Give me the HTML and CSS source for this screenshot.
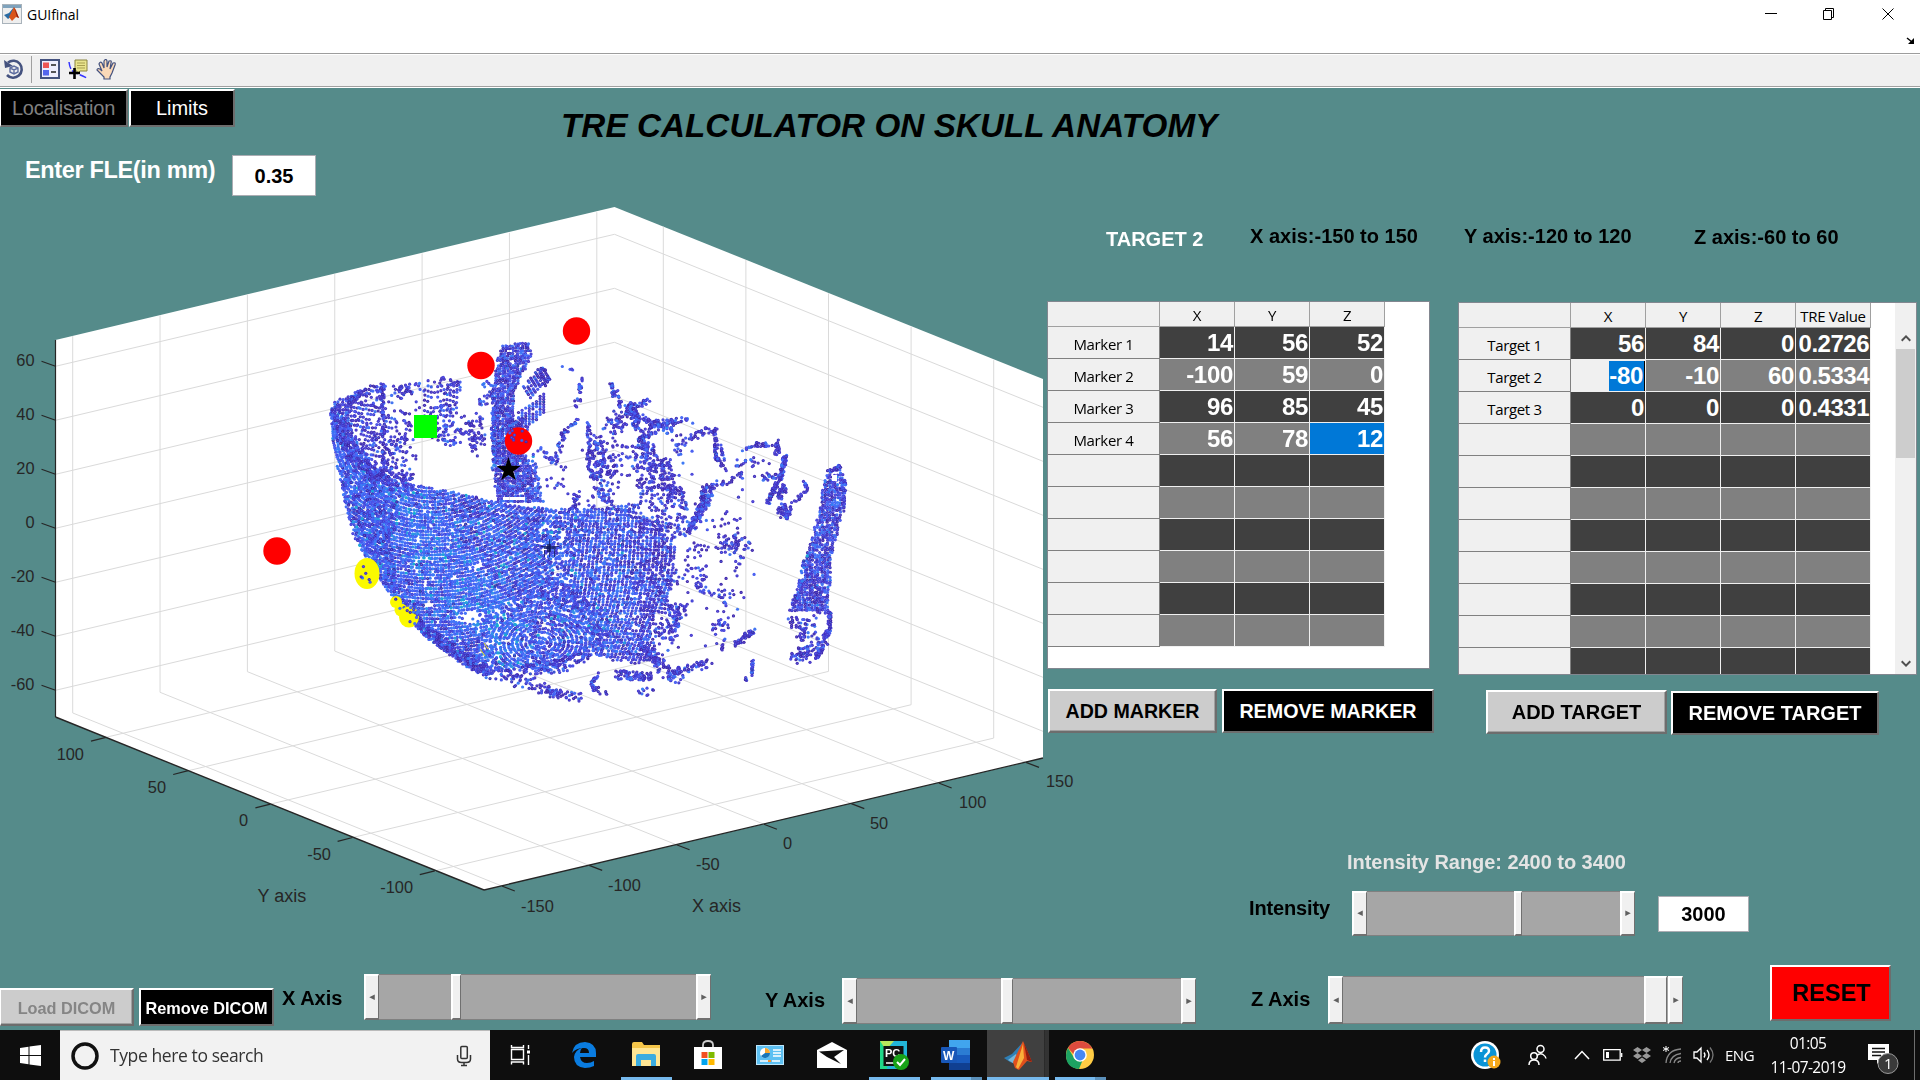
FILE: index.html
```html
<!DOCTYPE html>
<html lang="en">
<head>
<meta charset="utf-8">
<title>GUIfinal</title>
<link rel="stylesheet" href="styles.css">
</head>
<body>
<div class="window">
  <header class="titlebar">
    <svg class="app-icon" width="20" height="20" viewBox="0 0 20 20"><rect x=".5" y=".5" width="19" height="19" fill="#eee" stroke="#a9b3bb"/><rect x="1" y="1" width="18" height="3" fill="#7fa3bd"/><path d="M2 11l5-2 5-6-2 9-4 3z" fill="#2b6ca3"/><path d="M7 13l5-10 2 3 3 8-3-1-4 4z" fill="#d9541a"/><path d="M12 3l5 11-2-1z" fill="#8c1d12"/></svg>
    <span class="app-title">GUIfinal</span>
    <div class="win-controls">
      <svg width="130" height="16" viewBox="0 0 130 16" fill="none" stroke="#000"><path d="M0 7.5h12"/><path d="M58.500 4.500h8v9h-8zM60.500 4.500v-2h8v9h-2M117.500 2.500l11 11M128.500 2.500l-11 11"/></svg>
      <svg class="dock" width="9" height="8" viewBox="0 0 9 8"><path d="M1 1l5 4" stroke="#000" stroke-width="1.500"/><path d="M8 1v6H2z"/></svg>
    </div>
  </header>

  <div class="toolbar">
    <svg width="22" height="22" viewBox="0 0 22 22" fill="none"><path d="M5 4.500A8.500 8.500 0 1 1 4 17" stroke="#44527f" stroke-width="2.600"/><path d="M1 2l1 8 8-2z" fill="#44527f"/><path d="M7 10l4-2 4 2v4l-4 2-4-2zM7 10l4 2 4-2M11 12v4" stroke="#5f6ea0" stroke-width="1.400"/></svg>
    <i class="tool-sep"></i>
    <svg width="20" height="20" viewBox="0 0 20 20"><rect x="1" y="1" width="18" height="18" fill="#eef" stroke="#44527f" stroke-width="2"/><rect x="3" y="3.500" width="6" height="5.500" fill="#e55"/><rect x="3" y="11" width="6" height="5.500" fill="#56e"/><path d="M11 6h5M11 13h5" stroke="#222" stroke-width="1.500"/></svg>
    <svg width="20" height="20" viewBox="0 0 20 20"><path d="M1 3q1 8 5 10t13 6" fill="none" stroke="#33f" stroke-width="1.500" stroke-dasharray="7 2"/><path d="M7 1h12v11h-7l-3 3v-3H7z" fill="#e9e48c" stroke="#8a8440"/><path d="M9 4h8M9 6.500h8M9 9h8" stroke="#a79f50"/><path d="M1 14h11M6.500 9v11" stroke="#000" stroke-width="2.600"/></svg>
    <svg width="21" height="21" viewBox="0 0 21 21"><path d="M8 20v-2L1 11q0-2 3-1l2 2-3-7q1-3 3-1l2 5V2q2-3 3 0v6l2-6q3-1 2 2l-1 6 3-6q3-1 2 2l-3 8-2 4v2z" fill="#fbd9b8" stroke="#44527f" stroke-width="1.200"/></svg>
  </div>

  <main class="figure">
    <section class="head">
      <div class="head-left">
        <div class="tabs">
          <button class="btn dark tab tab-off">Localisation</button>
          <button class="btn dark tab tab-on">Limits</button>
        </div>
        <div class="fle"><label>Enter FLE(in mm)</label><span class="edit fle-edit">0.35</span></div>
      </div>
      <h1>TRE CALCULATOR ON SKULL ANATOMY</h1>
    </section>

    <section class="middle">
      <div class="plot">
        <svg id="axes" width="1100" height="725" viewBox="0 200 1100 725"></svg>
        <canvas id="cloud" width="1100" height="725"></canvas>
        <svg width="1100" height="725" viewBox="0 200 1100 725">
          <circle cx="576.500" cy="331" r="13.700" fill="red"/>
          <circle cx="481" cy="365.500" r="13.700" fill="red"/>
          <circle cx="277" cy="551" r="13.700" fill="red"/>
          <rect x="414" y="415" width="23" height="23" fill="#0f0"/>
          <path d="M508.500 457l2.900 8.800 9.100.1-7.300 5.500 2.700 8.900-7.400-5.300-7.400 5.300 2.700-8.900-7.300-5.500 9.100-.1z"/>
        </svg>
      </div>

      <div class="side">
        <div class="ranges">
          <span class="r-target">TARGET 2</span><span class="r-x">X axis:-150 to 150</span><span class="r-y">Y axis:-120 to 120</span><span class="r-z">Z axis:-60 to 60</span>
        </div>
        <div class="tables">
          <div class="marker-col">
            <div class="sheet sheet-m">
              <table><colgroup><col class="c-name"><col><col><col></colgroup>
                <tr><th></th><th>X</th><th>Y</th><th>Z</th></tr>
                <tr><th>Marker 1</th><td>14</td><td>56</td><td>52</td></tr>
                <tr><th>Marker 2</th><td>-100</td><td>59</td><td>0</td></tr>
                <tr><th>Marker 3</th><td>96</td><td>85</td><td>45</td></tr>
                <tr><th>Marker 4</th><td>56</td><td>78</td><td class="sel">12</td></tr>
                <tr><th></th><td></td><td></td><td></td></tr>
                <tr><th></th><td></td><td></td><td></td></tr>
                <tr><th></th><td></td><td></td><td></td></tr>
                <tr><th></th><td></td><td></td><td></td></tr>
                <tr><th></th><td></td><td></td><td></td></tr>
                <tr><th></th><td></td><td></td><td></td></tr>
              </table>
            </div>
            <div class="btn-row row-m"><button class="btn light add-m">ADD MARKER</button><button class="btn dark rem-m">REMOVE MARKER</button></div>
          </div>
          <div class="target-col">
            <div class="sheet sheet-t">
              <table><colgroup><col class="c-name"><col><col><col><col></colgroup>
                <tr><th></th><th>X</th><th>Y</th><th>Z</th><th>TRE Value</th></tr>
                <tr><th>Target 1</th><td>56</td><td>84</td><td>0</td><td class="tre">0.2726</td></tr>
                <tr><th>Target 2</th><td class="edit-cell"><span>-80</span></td><td>-10</td><td>60</td><td class="tre">0.5334</td></tr>
                <tr><th>Target 3</th><td>0</td><td>0</td><td>0</td><td class="tre">0.4331</td></tr>
                <tr><th></th><td></td><td></td><td></td><td></td></tr>
                <tr><th></th><td></td><td></td><td></td><td></td></tr>
                <tr><th></th><td></td><td></td><td></td><td></td></tr>
                <tr><th></th><td></td><td></td><td></td><td></td></tr>
                <tr><th></th><td></td><td></td><td></td><td></td></tr>
                <tr><th></th><td></td><td></td><td></td><td></td></tr>
                <tr><th></th><td></td><td></td><td></td><td></td></tr>
                <tr><th></th><td></td><td></td><td></td><td></td></tr>
              </table>
              <div class="vscroll">
                <svg width="10" height="7" viewBox="0 0 10 7" fill="none" stroke="#505050" stroke-width="2"><path d="M.7 5.700L5 1.400l4.300 4.300"/></svg>
                <i></i>
                <svg class="down" width="10" height="7" viewBox="0 0 10 7" fill="none" stroke="#505050" stroke-width="2"><path d="M.7 1.300L5 5.600l4.300-4.300"/></svg>
              </div>
            </div>
            <div class="btn-row row-t"><button class="btn light add-t">ADD TARGET</button><button class="btn dark rem-t">REMOVE TARGET</button></div>
          </div>
        </div>
        <div class="int-title">Intensity Range: 2400 to 3400</div>
        <div class="int-row">
          <label>Intensity</label>
          <div class="slider s-int"><b>◂</b><i class="gap" style="width:147px"></i><u style="width:8px"></u><i class="rest"></i><b>▸</b></div>
          <span class="edit int-edit">3000</span>
        </div>
      </div>
    </section>

    <section class="bottom">
      <button class="btn light load">Load DICOM</button>
      <button class="btn dark remove">Remove DICOM</button>
      <label class="l-x">X Axis</label>
      <div class="slider s-x"><b>◂</b><i class="gap" style="width:72px"></i><u style="width:10px"></u><i class="rest"></i><b>▸</b></div>
      <label class="l-y">Y Axis</label>
      <div class="slider s-y"><b>◂</b><i class="gap" style="width:144px"></i><u style="width:12px"></u><i class="rest"></i><b>▸</b></div>
      <label class="l-z">Z Axis</label>
      <div class="slider s-z"><b>◂</b><i class="gap" style="width:301px"></i><u style="width:23px"></u><i class="rest"></i><b>▸</b></div>
      <button class="btn reset">RESET</button>
    </section>
  </main>

  <footer class="taskbar">
    <div class="start"><svg width="21" height="21" viewBox="0 0 21 21" fill="#fff"><path d="M0 3l8.500-1.200V10H0zM9.500 1.600L21 0v10H9.500zM0 11h8.500v8.200L0 18zM9.500 11H21v10L9.500 19.400z"/></svg></div>
    <div class="search">
      <svg width="30" height="30" viewBox="0 0 30 30"><circle cx="15" cy="15" r="12" fill="none" stroke="#111" stroke-width="3.500"/></svg>
      <span>Type here to search</span>
      <svg width="16" height="22" viewBox="0 0 16 22" fill="none" stroke="#333" stroke-width="1.500"><rect x="4.800" y="1.500" width="6.500" height="12" rx="1"/><path d="M1.500 10v4q0 3.500 4 3.500h5q4 0 4-3.500v-4M8 17.500V21M5 20.500h6"/></svg>
    </div>
    <div class="task first"><svg width="22" height="22" viewBox="0 0 22 22" fill="none" stroke="#fff" stroke-width="1.400"><path d="M1.500 5.500h12v10h-12zM1.500 1v2.500h12V1M1.500 20.500V18h12v2.500M18.500 1v4M18.500 11v10"/><path d="M17 8h3" stroke-width="3"/></svg></div>
    <div class="task"><svg width="26" height="28" viewBox="0 0 26 28"><path d="M1 12Q3 1 14 1q11 1 11 11v4H9q1 6 7 6 4 0 7-2v5q-4 2-9 2Q3 26 3 16q1-7 8-9-2 2-2 5h9q0-5-5-5-8 0-12 5z" fill="#0a7ce0"/></svg></div>
    <div class="task run r-full"><svg width="28" height="26" viewBox="0 0 28 26"><path d="M0 2q0-2 2-2h8l2 3h16v21H0z" fill="#f5c64a"/><path d="M0 6h28v18H0z" fill="#ffe694"/><path d="M4 24V14q0-2 2-2h16q2 0 2 2v10h-5v-6H9v6z" fill="#3bace0"/></svg></div>
    <div class="task"><svg width="30" height="30" viewBox="0 0 30 30"><path d="M10 8V5q0-4 5-4t5 4v3" fill="none" stroke="#ccc" stroke-width="1.800"/><path d="M1 7h28v22H1z" fill="#fff"/><path d="M8.500 12h6v6h-6z" fill="#f25022"/><path d="M15.500 12h6v6h-6z" fill="#7fba00"/><path d="M8.500 19h6v6h-6z" fill="#00a4ef"/><path d="M15.500 19h6v6h-6z" fill="#ffb900"/></svg></div>
    <div class="task"><svg width="28" height="20" viewBox="0 0 28 20"><rect x=".5" y=".5" width="27" height="19" fill="#5dc0f2" stroke="#bce6fb"/><circle cx="9" cy="8" r="5" fill="#fff"/><path d="M9 8V3a5 5 0 0 1 5 5z" fill="#f7a72e"/><path d="M9 8h5a5 5 0 0 1-9 3z" fill="#1976b8"/><path d="M17 5h8M17 8h8M17 11h8M4 16h8M16 16h8" stroke="#fff" stroke-width="1.500"/><path d="M12 16h3" stroke="#f7932e" stroke-width="2"/></svg></div>
    <div class="task"><svg width="30" height="26" viewBox="0 0 30 26"><path d="M0 8L15 0l15 8v18H0z" fill="#fff"/><path d="M2 9.500L27 8 17 15l7 7-14-7z" fill="#0d0d0d"/></svg></div>
    <div class="task run r-full"><svg width="30" height="30" viewBox="0 0 30 30"><path d="M1 1h18l-8 28H1z" fill="#21d789"/><path d="M12 1h16v17l-10 11H8z" fill="#22b5d8"/><path d="M1 1h14l-8 9z" fill="#b8e65c"/><path d="M4.500 6h20v20h-20z" fill="#111"/><text x="6" y="17" class="ico" font-size="11">PC</text><path d="M7 23h8" stroke="#fff" stroke-width="1.500"/><circle cx="22" cy="22" r="8" fill="#18a318"/><path d="M18 22l3 3 5-6" fill="none" stroke="#fff" stroke-width="2"/></svg></div>
    <div class="task run r-multi"><svg width="30" height="30" viewBox="0 0 30 30"><path d="M8 0h21v8H8z" fill="#41a5ee"/><path d="M8 8h21v7H8z" fill="#2b7cd3"/><path d="M8 15h21v8H8z" fill="#185abd"/><path d="M8 23h21v7H8z" fill="#103f91"/><rect y="7" width="16" height="16" rx="1" fill="#1857b8"/><text x="2" y="19.500" class="ico" font-size="12">W</text></svg></div>
    <div class="task run r-full active"><svg width="30" height="30" viewBox="0 0 30 30"><path d="M1 18l8-4L20 2l-8 22-5-2z" fill="#2f7fb5"/><path d="M5 20l8-6 2 4-5 5z" fill="#7ab8d8"/><path d="M12 28l-2-6L20 1l9 21-5-1-8 9z" fill="#e0501c"/><path d="M13 27l7-23 1 14-6 11z" fill="#f9b03a"/><path d="M21 3l8 19-5-2z" fill="#8f1d10"/></svg></div>
    <div class="task run r-multi"><svg width="28" height="28" viewBox="0 0 28 28"><circle cx="14" cy="14" r="14" fill="#fc4"/><path d="M2 7Q6 0 14 0q8 0 12.500 7.500H14q-5 1-6 6z" fill="#dd4b3e"/><path d="M2 7l6.500 10.500q4 4 8 2L13 28Q0 27 0 14q0-4 2-7z" fill="#1da362"/><circle cx="14" cy="14" r="6.800" fill="#fff"/><circle cx="14" cy="14" r="5.400" fill="#4587f3"/></svg></div>
    <div class="tray">
      <svg class="t-help" width="30" height="30" viewBox="0 0 30 30"><circle cx="14" cy="15" r="14" fill="#fff"/><circle cx="14" cy="15" r="11.500" fill="#0b94d6"/><path d="M10 12q0-4.500 4-4.500t4 3.500q0 2-2.500 3.500-1.500 1-1.500 3M14 19.500v2.500" fill="none" stroke="#fff" stroke-width="2.500"/><circle cx="23" cy="22" r="6.500" fill="#f5a91d"/><path d="M23 18v2M23 21v5" stroke="#fff" stroke-width="2"/></svg>
      <svg class="t-people" width="19" height="22" viewBox="0 0 19 22" fill="none" stroke="#fff" stroke-width="1.500"><circle cx="12.500" cy="5" r="3.500"/><circle cx="6" cy="12" r="3.300"/><path d="M9 11.500q3-3 6-1 3 2 3 4M1 21q0-5 5-5t5 5"/></svg>
      <svg class="t-chev" width="16" height="10" viewBox="0 0 16 10" fill="none" stroke="#fff" stroke-width="1.500"><path d="M1 9l7-7.500L15 9"/></svg>
      <svg class="t-batt" width="20" height="12" viewBox="0 0 20 12" fill="none" stroke="#fff" stroke-width="1.300"><path d="M.7.700h16.500v10.500H.7zM18.700 4v4"/><path d="M3 3h3v6H3z" fill="#fff" stroke="none"/></svg>
      <svg class="t-drop" width="18" height="17" viewBox="0 0 18 17" fill="#999"><path d="M4.500 0L9 3 4.500 6 0 3zM13.500 0L18 3l-4.500 3L9 3zM4.500 6L9 9l-4.500 3L0 9zM13.500 6L18 9l-4.500 3L9 9zM9 10.500l4 2.800L9 16l-4-2.700z"/></svg>
      <svg class="t-wifi" width="19" height="20" viewBox="0 0 19 20" fill="none" stroke="#888" stroke-width="1.300"><path d="M3 18Q4 5 18 4M7 18Q8 10 18 8.500M11 18q1-5 7-5.500M15 18q0-2 3-2"/><path d="M3 1v6M0 2.500l6 3M6 2.500l-6 3" stroke="#fff" stroke-width="1"/></svg>
      <svg class="t-vol" width="21" height="18" viewBox="0 0 21 18" fill="none" stroke="#fff" stroke-width="1.300"><path d="M1 6h3l4-4v14l-4-4H1zM11 6.500q2 2.500 0 5M14 4q4 5 0 10"/><path d="M17 1.500q6 7.500 0 15" stroke="#777"/></svg>
      <span class="lang">ENG</span>
      <span class="clock"><span>01:05</span><span>11-07-2019</span></span>
      <svg class="t-note" width="32" height="32" viewBox="0 0 32 32"><path d="M0 2h21v16h-8l-4 4v-4H0z" fill="#fff"/><path d="M4 6.500h13M4 10h13M4 13.500h9" stroke="#111" stroke-width="1.300"/><circle cx="20" cy="21.500" r="10" fill="#3a3a3a" stroke="#999"/><text x="16" y="27" class="badge">1</text></svg>
      <i class="peek"></i>
    </div>
  </footer>
</div>
<script src="script.js"></script>
</body>
</html>
```
FILE: styles.css
```css
* { box-sizing: border-box; }
body { margin: 0; font-family: "Liberation Sans", Arial, sans-serif; overflow: hidden; background: #fff; }
.window { width: 1920px; height: 1080px; display: flex; flex-direction: column; }
svg, canvas { display: block; }

.titlebar { height: 53px; display: flex; align-items: flex-start; background: #fff; }
.app-icon { margin: 4px 0 0 2px; }
.app-title { margin: 5px 0 0 5px; font: 14px/19px "Open Sans", sans-serif; letter-spacing: -0.050px; }
.win-controls { margin-left: auto; padding-top: 6px; display: flex; flex-direction: column; align-items: flex-end; gap: 15px; padding-right: 5px; }
.win-controls > svg:first-child { margin-right: 20px; }

.toolbar { height: 35px; border-top: 1px solid #9d9d9d; border-bottom: 1px solid #fff; background: #f0f0f0; box-shadow: inset 0 1px #fff, inset 0 -1px #a0a0a0; display: flex; align-items: center; padding-left: 3px; padding-bottom: 3px; }
.tool-sep { width: 1px; height: 27px; background: #a0a0a0; margin: 0 8px 0 6px; }
.toolbar svg + svg { margin-left: 8px; }

.figure { height: 942px; background: #558b8a; display: flex; flex-direction: column; }
.btn { font: bold 20px "Liberation Sans", Arial, sans-serif; padding: 0; border: 2px solid; border-color: #fff #6d6d6d #6d6d6d #fff; border-radius: 0; white-space: nowrap; flex: none; }
.dark { background: #000; color: #fff; }
.light { background: #ccc; color: #000; box-shadow: inset -1px -1px #a0a0a0; }
.edit { background: #fff; border: 1px solid #abadb3; font-weight: bold; font-size: 20px; display: flex; align-items: center; justify-content: center; flex: none; }
label { font-weight: bold; font-size: 20px; white-space: nowrap; flex: none; }

.head { height: 112px; display: flex; }
.head-left { width: 561px; }
.tabs { display: flex; gap: 1px; padding-top: 1px; }
.tab { height: 38px; font-weight: normal; font-size: 20px; }
.tab-off { width: 128px; color: #808080; border-left-width: 1px; letter-spacing: -0.200px; }
.tab-on { width: 106px; }
.fle { display: flex; }
.fle label { color: #fff; font-size: 23.500px; margin: 30px 0 0 25px; width: 207px; line-height: 27px; letter-spacing: -0.350px; }
.fle-edit { width: 84px; height: 41px; margin-top: 28px; padding-top: 1px; }
h1 { margin: 19px 0 0; font: italic bold 33.200px/38px "Liberation Sans", Arial, sans-serif; color: #000; white-space: nowrap; letter-spacing: 0.080px; }

.middle { height: 725px; display: flex; }
.plot { width: 1047px; display: grid; flex: none; }
.plot > * { grid-area: 1 / 1; }
.tick { font-size: 16.400px; fill: #262626; }
.name { font-size: 18px; fill: #262626; }
.side { flex: 1; }
.ranges { height: 101px; display: flex; align-items: flex-start; padding-left: 59px; font: bold 20px/23px "Liberation Sans", Arial, sans-serif; white-space: nowrap; }
.ranges span { flex: none; padding-top: 25px; }
.ranges .r-target { color: #fff; width: 144px; padding-top: 28px; }
.ranges .r-x { width: 214px; }
.ranges .r-y { width: 230px; }
.ranges .r-z { padding-top: 26px; }

.tables { display: flex; gap: 28px; height: 447px; }
.marker-col { width: 383px; }
.target-col { padding-top: 1px; width: 459px; }
.sheet { background: #fff; border: 1px solid #828790; overflow: hidden; display: flex; }
.sheet-m { width: 383px; height: 368px; }
.sheet-t { width: 459px; height: 373px; justify-content: space-between; }
table { border-collapse: separate; border-spacing: 0; table-layout: fixed; flex: none; width: max-content; align-self: flex-start; }
col { width: 75px; }
.c-name { width: 112px; }
th { font: 15px/20px "Open Sans", sans-serif; background: #f0f0f0; border-right: 1px solid #808080; border-bottom: 1px solid #808080; padding: 3px 0 0; text-align: center; letter-spacing: -0.350px; white-space: nowrap; overflow: hidden; }
tr:first-child th { height: 25px; padding: 1px 0 0; line-height: 20px; border-color: #a0a0a0; }
tr th:first-child { width: 112px; }
tr:first-child th:not(:first-child) { width: 75px; }
tr { height: 32px; }
tr:first-child { height: 25px; }
td { font-weight: bold; font-size: 24px; line-height: 30px; height: 32px; padding: 1px 1px 0 0; text-align: right; color: #fff; background: #808080; border-right: 1px solid #f0f0f0; border-bottom: 1px solid #f0f0f0; white-space: nowrap; letter-spacing: -0.300px; }
tr:nth-child(even) td { background: #404040; }
tr td.sel { background: #0078d7; }
tr td.edit-cell { background: #f0f0f0; padding-right: 0; }
.edit-cell span { background: #0078d7; display: inline-block; height: 30px; border-right: 1px solid #000; padding: 0 1px 0 0; vertical-align: top; }
td.tre { letter-spacing: -0.500px; }
.vscroll { width: 21px; background: #f0f0f0; display: flex; flex-direction: column; align-items: center; padding-top: 32px; }
.vscroll i { width: 19px; height: 109px; background: #cdcdcd; margin-top: 7px; }
.vscroll .down { margin: auto 0 7px; }
.btn-row { display: flex; align-items: flex-start; }
.row-m { padding: 20px 0 0 1px; gap: 5px; }
.row-t { padding: 15px 0 0 28px; gap: 4px; }
.add-m { width: 169px; height: 44px; font-size: 19.600px; }
.rem-m { width: 212px; height: 44px; font-size: 19.700px; }
.add-t { width: 181px; height: 44px; }
.rem-t { width: 208px; height: 44px; margin-top: 1px; }

.int-title { margin: 103px 0 0 300px; font: bold 20px/23px "Liberation Sans", Arial, sans-serif; color: #e4e4e4; letter-spacing: -0.040px; }
.int-row { display: flex; align-items: flex-start; margin-top: 17px; padding-left: 202px; }
.int-row label { width: 103px; padding-top: 6px; line-height: 23px; letter-spacing: -0.150px; }
.int-edit { width: 91px; height: 36px; margin: 5px 0 0 23px; }

.slider { display: flex; background: #a6a6a6; flex: none; border-top: 1px solid #808080; border-bottom: 1px solid #808080; }
.slider b, .slider u { background: #f0f0f0; border: 2px solid; border-color: #fff #707070 #707070 #fff; border-right-width: 1px; flex: none; text-decoration: none; margin: -1px 0; }
.slider b { width: 15px; font: 11px "DejaVu Sans", sans-serif; color: #606060; display: flex; align-items: center; justify-content: center; padding-bottom: 2px; }
.slider .gap { flex: none; }
.slider .rest { flex: 1; }
.s-int { width: 283px; height: 45px; }

.bottom { height: 105px; display: flex; align-items: flex-start; }
.bottom label { line-height: 23px; }
.load { width: 134px; height: 38px; margin-top: 63px; padding-top: 2px; font-size: 16.300px; color: #858585; border-left-width: 1px; }
.remove { width: 135px; height: 38px; margin: 63px 0 0 5px; padding-top: 2px; font-size: 16.300px; }
.l-x { width: 82px; margin: 62px 0 0 8px; }
.s-x { width: 347px; height: 46px; margin-top: 49px; }
.l-y { width: 77px; margin: 64px 0 0 54px; }
.s-y { width: 354px; height: 46px; margin-top: 53px; }
.l-z { width: 77px; margin: 63px 0 0 55px; }
.s-z { width: 355px; height: 48px; margin-top: 51px; }
.reset { width: 121px; height: 56px; margin: 40px 0 0 87px; background: #f00; color: #000; font-size: 23.500px; padding-left: 2px; }

.taskbar { height: 50px; background: #0e0e0e; display: flex; align-items: stretch; color: #fff; }
.start { width: 60px; display: flex; align-items: center; justify-content: center; }
.search { width: 430px; background: #f2f2f2; border-top: 1px solid #bbb; display: flex; align-items: center; padding: 0 18px 0 10px; color: #333; font: 17.500px "Open Sans", sans-serif; }
.search span { margin-left: 10px; flex: 1; letter-spacing: -0.400px; margin-top: -1px; }
.task { width: 62px; display: flex; align-items: center; justify-content: center; background: linear-gradient(#76b9ed, #76b9ed) no-repeat center 47px / 0 3px; flex: none; }
.task.first { width: 63px; padding-right: 2px; }
.task.r-full { background-size: 51px 3px; }
.task.r-multi { background: linear-gradient(90deg, #76b9ed 40px, #5b90ba 40px) no-repeat center 47px / 51px 3px; }
.task.active { background: linear-gradient(#76b9ed, #76b9ed) no-repeat 0 47px / 62px 3px, linear-gradient(90deg, #404040 57px, #222 57px, #333 58px); }
.ico { font-family: "Liberation Sans", sans-serif; font-weight: bold; fill: #fff; }
.tray { margin-left: auto; display: flex; align-items: center; flex: none; width: 449px; }
.t-people { margin-left: 27px; }
.t-chev { margin-left: 27px; }
.t-batt { margin-left: 13px; }
.t-drop { margin-left: 10px; }
.t-wifi { margin-left: 12px; }
.t-vol { margin-left: 11px; }
.lang { font: 15px "Open Sans", sans-serif; margin-left: 11px; width: 30px; letter-spacing: -0.500px; }
.clock { display: flex; flex-direction: column; align-items: center; font: 15.500px/23px "Open Sans", sans-serif; width: 80px; margin-left: 13px; letter-spacing: -0.600px; white-space: nowrap; }
.clock span + span { margin-top: 1px; margin-bottom: -1px; }
.clock span:first-child { margin-top: -1px; }
.t-note { margin: 5px 0 0 20px; }
.badge { font: 15px "Open Sans", sans-serif; fill: #fff; }
.peek { width: 1px; align-self: stretch; background: #6d6d6d; margin: 0 5px 0 auto; }
```
FILE: script.js
```js
// ---- 3-D axes box ----
const NS = 'http://www.w3.org/2000/svg';
const axes = document.getElementById('axes');
function el(name, attrs, text) {
  const e = document.createElementNS(NS, name);
  for (const k in attrs) e.setAttribute(k, attrs[k]);
  if (text !== undefined) e.textContent = text;
  axes.appendChild(e);
}
const seg = (x1, y1, x2, y2, stroke, w) => el('line', { x1, y1, x2, y2, stroke, 'stroke-width': w || 1 });
const GRID = '#dadada', INK = '#262626';
el('polygon', { points: '55.500,340 614.500,207 1043,379 1043,758 484,890 55.500,717', fill: '#fff' });
for (let i = 0; i < 7; i++) {
  // lines of constant X: left wall and floor
  const wx = 72.7 + 87.35 * i, t = (wx - 55.5) / 559, fy = 717 - 132 * t;
  seg(wx, 340 - 132 * t, wx, fy, GRID);
  const bx = 501.8 + 87.37 * i, by = 886 - 20.6 * i;
  seg(wx, fy, bx, by, GRID);
  seg(bx, by, bx + 13, by + 5, INK, 1.2);
  // lines of constant Z
  const z = 366.3 + 54 * i;
  seg(55.5, z, 614.5, z - 132, GRID);
  seg(614.5, z - 132, 1043, z + 41, GRID);
  seg(55.5, z, 41.5, z - 5, INK, 1.2);
  el('text', { x: 34.5, y: z - 0.2, class: 'tick', 'text-anchor': 'end' }, 60 - 20 * i);
}
for (let i = 0; i < 5; i++) {
  // lines of constant Y: right wall and floor
  const wx = 663.3 + 82.6 * i, t = (wx - 614.5) / 428.5, fy = 585 + 173 * t;
  seg(wx, 207 + 173 * t, wx, fy, GRID);
  const bx = 106 + 82.2 * i, by = 737.3 + 33.4 * i;
  seg(wx, fy, bx, by, GRID);
  seg(bx, by, bx - 15, by + 3.8, INK, 1.2);
}
seg(55.5, 340, 55.5, 717, INK, 1.2);
seg(55.5, 717, 484, 890, INK, 1.4);
seg(484, 890, 1043, 758, INK, 1.4);
[[100, 84, 760], [50, 166, 793], [0, 248, 826], [-50, 331, 860], [-100, 413, 893]]
  .forEach(([s, x, y]) => el('text', { x, y, class: 'tick', 'text-anchor': 'end' }, s));
[[-150, 521, 912], [-100, 608, 891], [-50, 696, 870], [0, 783, 849], [50, 870, 829], [100, 959, 808], [150, 1046, 787]]
  .forEach(([s, x, y]) => el('text', { x, y, class: 'tick' }, s));
el('text', { x: 257.5, y: 902, class: 'name' }, 'Y axis');
el('text', { x: 692, y: 912, class: 'name' }, 'X axis');

// ---- skull surface point cloud ----
const ctx = document.getElementById('cloud').getContext('2d');
ctx.translate(0, -200);
let seed = 20190711;
const rnd = () => { seed = (seed * 1664525 + 1013904223) >>> 0; return seed / 4294967296; };
const LOW = ['#3e26a8', '#4230b8', '#4433c4', '#4539cf'], MID = ['#4743dc', '#4650ea', '#4360f6', '#3e6ff8', '#3a7af6'], HIGH = ['#2e95e8', '#1fa3dc', '#12b1d0'];
const pick = a => a[rnd() * a.length | 0];
// one marker: dark ring with a lighter centre
function dot(x, y, heat) {
  ctx.fillStyle = rnd() < (heat - 0.6) * 0.2 ? pick(HIGH) : rnd() < heat * 0.85 ? pick(MID) : pick(LOW);
  ctx.beginPath(); ctx.arc(x + 0.5, y + 0.5, 1.6, 0, 6.3); ctx.fill();
  ctx.fillStyle = rnd() < heat * heat * 0.25 ? pick(HIGH) : (rnd() < heat ? '#4f7cf6' : '#6a62dd');
  ctx.fillRect(x, y, 1, 1);
}
function inside(p, x, y) {
  let c = false;
  for (let i = 0, j = p.length - 1; i < p.length; j = i++) {
    const [a, b] = p[i], [d, e] = p[j];
    if ((b > y) !== (e > y) && x < (d - a) * (y - b) / (e - b) + a) c = !c;
  }
  return c;
}
function fillArea(p, dx, dy, keep, heat, jit) {
  const xs = p.map(q => q[0]), ys = p.map(q => q[1]);
  for (let y = Math.min(...ys); y <= Math.max(...ys); y += dy)
    for (let x = Math.min(...xs); x <= Math.max(...xs); x += dx)
      if (inside(p, x, y) && rnd() < keep) dot(x + (rnd() - 0.5) * jit, y + (rnd() - 0.5) * jit, heat);
}
function streak(x1, y1, x2, y2, n, jit, heat) {
  for (let i = 0; i < n; i++) {
    const t = rnd();
    dot(x1 + (x2 - x1) * t + (rnd() - 0.5) * jit, y1 + (y2 - y1) * t + (rnd() - 0.5) * jit, heat || 0.35);
  }
}
function clump(cx, cy, rx, ry, n, heat) {
  for (let i = 0; i < n; i++) {
    const a = rnd() * 6.283, r = Math.sqrt(rnd());
    dot(cx + Math.cos(a) * r * rx, cy + Math.sin(a) * r * ry, heat || 0.35);
  }
}

// bowl of the skull: scan rows run in three curve families that blend into each other
const bowl = [[329, 410], [336, 402], [352, 430], [372, 466], [400, 481], [430, 487], [460, 493], [500, 503], [545, 508], [590, 507], [625, 505], [650, 520], [662, 532], [675, 545], [676, 570], [670, 596], [650, 622], [652, 655], [640, 663], [618, 662], [585, 650], [570, 660], [545, 672], [520, 668], [495, 670], [486, 677], [465, 666], [445, 652], [420, 632], [398, 607], [380, 580], [364, 557], [353, 535], [344, 500], [335, 458]];
const ss = (a, b, v) => { const t = Math.min(1, Math.max(0, (v - a) / (b - a))); return t * t * (3 - 2 * t); };
const wEye = (x, y) => ss(80, 32, Math.hypot(x - 540, (y - 642) * 1.25));
const wRight = (x, y) => ss(510, 600, x) * (1 - wEye(x, y));
function surface(x, y, keep) {
  if (!inside(bowl, x, y) || rnd() > keep) return;
  if (Math.hypot((x - 470) / 15, (y - 616) / 7) < 1 && rnd() < 0.75) return;
  if (Math.hypot(x - 428, y - 604) < 3.5) return;
  const edge = ss(610, 665, x) * 0.4 + ss(640, 665, y) * 0.2;
  const warm = ss(55, 5, Math.abs(x - 395 - (y - 500) * 0.75)) * 0.35;
  const seam = ss(16, 3, Math.abs(x - 340 - (y - 400) * 0.55)) * (y < 480 ? 0.35 : 0.05);
  dot(x + (rnd() - 0.5) * 0.8, y + (rnd() - 0.5) * 0.8, Math.max(0.25, 0.82 + warm - edge - seam));
}
// second sheet of points showing through the first
for (let y = 470; y < 675; y += 5.1)
  for (let x = 335; x < 640; x += 3.6) surface(x + Math.sin(y / 19) * 3, y + (x - 335) * 0.12, 0.62);
for (let r = 20; r < 340; r += 3.8) {
  const da = 2.7 / r;
  for (let a = -0.6; a < 3.7; a += da) {
    const x = 432 + r * Math.cos(a), y = 430 + r * 0.88 * Math.sin(a);
    const w = 1 - Math.max(wEye(x, y), wRight(x, y));
    if (rnd() < w * 1.25) surface(x, y, 0.94);
  }
}
for (let r = 2; r < 90; r += 4) {
  const da = 2.8 / r;
  for (let a = 0; a < 6.283; a += da) {
    const x = 540 + r * 1.08 * Math.cos(a), y = 642 + r * 0.75 * Math.sin(a);
    if (rnd() < wEye(x, y) * 1.1) surface(x, y, 0.85);
  }
}
for (let c = 0; c < 60; c++)
  for (let y = 500; y < 665; y += 2.9) {
    const x = 505 + c * 3.9 - Math.pow((y - 500) / 165, 2) * 34 + Math.sin(y / 26 + c * 0.1) * 1.5;
    if (rnd() < wRight(x, y) * 1.2) surface(x, y, 0.92);
  }
fillArea([[329, 412], [335, 415], [350, 447], [372, 475], [400, 490], [392, 560], [404, 600], [425, 625], [445, 652], [420, 632], [380, 580], [364, 557], [344, 500]], 2.7, 2.8, 0.6, 0.8, 1);
fillArea([[400, 604], [425, 622], [455, 645], [486, 662], [486, 677], [445, 652], [420, 632]], 2.6, 2.7, 0.85, 0.45, 1);

// left rim and inner wall
fillArea([[329, 412], [333, 402], [345, 396], [355, 396], [350, 412], [352, 438], [368, 462], [392, 480], [375, 480], [345, 455]], 2.7, 2.7, 0.9, 0.45, 1);
for (let k = 0; k < 19; k++) {
  const y = 400 + k * 4.4;
  for (let x = 346 + k * 1.6; x < 410 + rnd() * 10; x += 3)
    if (rnd() < 0.95 - (x - 340) / 95) dot(x, y + (x - 346) * 0.18 + rnd() * 2, 0.3);
}
streak(350, 400, 363, 391, 40, 7); streak(362, 393, 386, 385, 24, 7); streak(382, 386, 383, 470, 50, 3);
clump(378, 425, 28, 42, 60); clump(390, 455, 26, 26, 60); streak(383, 462, 410, 484, 45, 12);
streak(395, 392, 420, 385, 26, 12); clump(402, 390, 8, 5, 12);
// inner face, near the square target
for (let k = 0; k < 10; k++) {
  const y = 380 + k * 5.2;
  for (let x = 418 + (k > 3 ? 6 : 0); x < 462 - k; x += 3.2) if (rnd() < 0.6) dot(x, y + Math.sin(x * 0.25) * 1.6, 0.35);
}
clump(448, 385, 14, 9, 22); clump(446, 424, 20, 22, 70, 0.5); clump(472, 433, 14, 22, 45); streak(468, 418, 478, 456, 22, 5); clump(485, 393, 9, 14, 24);
for (let i = 0; i < 30; i++) dot(352 + rnd() * 70, 400 + rnd() * 85, 0.2);
// vertical column
fillArea([[502, 344], [513, 343], [528, 343], [531, 354], [524, 372], [514, 392], [513, 428], [524, 452], [534, 472], [543, 502], [496, 502], [494, 470], [490, 430], [491, 395], [496, 362]], 2.5, 2.5, 0.95, 0.55, 1.2);
streak(492, 400, 493, 470, 30, 3, 0.95); streak(532, 455, 540, 490, 15, 3, 0.95);
ctx.clearRect(507, 350, 5, 2); ctx.clearRect(503, 497, 22, 3);
// ridges right of the column
for (let k = 0; k < 8; k++) {
  for (let s = 0; s < 9; s++) if (rnd() < 0.75) dot(523 + s * 2.4 + k, 386 - s * 2.8 + k * 1.6 + (s > 6 ? 4 : 0), 0.4);
  for (let s = 0; s < 8; s++) if (rnd() < 0.88) dot(518 + k * 3.6, 412 + s * 2.6 - k * 2.2 - (k > 5 ? 3 : 0), 0.5);
}
clump(544, 374, 5, 12, 16); clump(519, 424, 12, 9, 26, 0.5);
streak(582, 377, 579, 392, 16, 4, 0.6); clump(577, 402, 4, 5, 8); streak(561, 365, 572, 369, 4, 2);
streak(578, 418, 560, 435, 16, 4); streak(563, 430, 556, 460, 24, 6, 0.5); streak(540, 450, 562, 466, 26, 9); clump(555, 483, 10, 8, 10);
// broken surface behind the bowl
streak(611, 382, 613, 396, 16, 4); streak(612, 391, 621, 391, 6, 2); streak(619, 394, 620, 412, 14, 3);
clump(630, 410, 6, 8, 40); streak(628, 408, 648, 400, 22, 5); streak(628, 412, 660, 424, 45, 5, 0.5); streak(655, 423, 688, 418, 28, 6);
for (let k = 0; k < 6; k++) streak(650 + k * 4, 422, 651 + k * 4, 434, 8, 1.5, 0.6);
streak(627, 412, 590, 450, 75, 18); clump(595, 460, 9, 20, 80); clump(605, 478, 14, 24, 60, 0.4);
streak(634, 415, 645, 458, 60, 8, 0.45); streak(643, 425, 655, 470, 75, 13, 0.45); streak(638, 440, 648, 500, 60, 16, 0.45);
clump(622, 460, 18, 18, 40); streak(664, 460, 672, 500, 70, 12, 0.4); clump(658, 478, 14, 22, 50);
streak(588, 420, 589, 445, 18, 4); streak(598, 490, 610, 505, 20, 8);
clump(578, 500, 24, 10, 12); streak(575, 495, 574, 508, 14, 4);
fillArea([[620, 506], [650, 498], [672, 492], [684, 508], [690, 530], [675, 540], [655, 530]], 3, 3, 0.5, 0.4, 2.4);
streak(677, 488, 686, 508, 18, 5); streak(704, 486, 702, 500, 26, 5); streak(704, 486, 718, 484, 8, 3); streak(704, 500, 690, 532, 80, 8); streak(712, 487, 706, 508, 24, 5);
clump(683, 440, 14, 25, 20); streak(672, 448, 688, 438, 10, 4); streak(690, 437, 712, 427, 22, 7); streak(715, 428, 716, 457, 36, 4); streak(716, 457, 724, 468, 16, 3); streak(720, 445, 723, 460, 12, 2);
streak(742, 450, 760, 443, 8, 4); streak(755, 444, 775, 444, 20, 4); streak(776, 440, 777, 454, 18, 5); clump(750, 466, 20, 9, 20); clump(766, 476, 12, 4, 22);
streak(785, 455, 780, 478, 60, 4, 0.4); streak(781, 474, 767, 503, 60, 3.500); clump(781, 491, 5, 8, 28); clump(784, 510, 7, 9, 45); streak(786, 508, 787, 520, 12, 2);
streak(803, 480, 807, 490, 10, 3); streak(806, 490, 790, 505, 14, 4); streak(718, 485, 740, 475, 16, 8);
clump(710, 530, 28, 28, 38); clump(735, 543, 15, 12, 32); clump(695, 570, 14, 20, 22); clump(705, 590, 10, 8, 12); clump(738, 550, 8, 18, 18); clump(722, 595, 8, 12, 14, 0.6);
for (let i = 0; i < 50; i++) dot(665 + rnd() * 90, 470 + rnd() * 130, 0.2);
// right fringe of the bowl
for (let k = 0; k < 36; k++) {
  const y = 518 + k * 4.1;
  for (let x = 640; x < 672 + 6 * Math.sin(k) - Math.max(0, k - 16) * 1.3; x += 3)
    if (rnd() < 0.62) dot(x + rnd(), y + (x - 630) * 0.12, 0.4);
}
// side wall on the far right
fillArea([[829, 470], [823, 480], [819, 510], [812, 535], [806, 555], [801, 580], [787, 610], [808, 611], [829, 614], [830, 560], [837, 535], [843, 500], [845, 480], [840, 467], [830, 468]], 2.5, 2.5, 0.94, 0.5, 1.2);
ctx.clearRect(832, 475, 5, 6);
streak(805, 555, 796, 600, 22, 4, 0.95); streak(829, 470, 840, 466, 22, 4); streak(844, 480, 842, 510, 30, 3, 0.6);
streak(829, 612, 829, 632, 26, 3); streak(828, 630, 817, 656, 55, 4); clump(803, 625, 18, 13, 38); clump(801, 653, 10, 6, 18); streak(796, 660, 826, 638, 50, 14); clump(803, 632, 5, 9, 18);
// loose points under the bowl
streak(500, 676, 540, 685, 36, 14); streak(540, 690, 580, 697, 34, 9, 0.4); streak(545, 688, 560, 696, 26, 6, 0.4);
streak(598, 673, 592, 680, 12, 3); streak(592, 680, 592, 688, 10, 3); streak(593, 688, 606, 694, 12, 6);
streak(616, 674, 650, 677, 70, 9, 0.4); streak(648, 648, 672, 680, 60, 11); streak(672, 672, 708, 662, 50, 9, 0.4); clump(675, 676, 8, 7, 20, 0.4); clump(645, 691, 9, 4, 10);
streak(655, 640, 680, 610, 42, 18); clump(678, 607, 10, 6, 24); clump(670, 627, 12, 14, 30); streak(640, 645, 655, 662, 30, 6);
clump(720, 627, 10, 8, 20); streak(732, 645, 754, 630, 40, 6); streak(724, 638, 722, 650, 8, 3); streak(752, 660, 751, 678, 20, 2, 0.4); clump(745, 679, 3, 2, 4);
streak(490, 674, 560, 664, 65, 14, 0.45); streak(550, 668, 592, 652, 55, 13, 0.45);
for (let i = 0; i < 26; i++) dot(655 + rnd() * 85, 575 + rnd() * 75, 0.2);

// registered fiducials on the surface
function blob(cx, cy, rx, ry, n) {
  ctx.fillStyle = '#fbf900';
  ctx.beginPath(); ctx.ellipse(cx, cy, rx, ry, 0, 0, 7); ctx.fill();
  clump(cx, cy, rx * 0.8, ry * 0.8, n, 0.4);
}
blob(367, 573.5, 12.5, 15.5, 6);
blob(396, 602, 6, 6, 1); blob(401, 610, 6.5, 6.5, 2); blob(409, 617, 10, 10.5, 4);
clump(414, 609, 6, 6, 12, 0.6);
ctx.strokeStyle = '#e6e020'; ctx.lineWidth = 1;
ctx.beginPath(); ctx.moveTo(480, 649); ctx.lineTo(485, 656); ctx.moveTo(484, 643); ctx.lineTo(488, 649); ctx.stroke();
// star partly hidden by the surface
ctx.fillStyle = 'rgba(16,24,90,.75)';
[[549, 539, 1, 18], [541, 546, 18, 1], [544, 550, 1, 7], [547, 544, 4, 8], [554, 549, 1, 8], [544, 547, 12, 2]].forEach(r => ctx.fillRect(...r));
// marker with surface points in front
ctx.fillStyle = '#f00';
ctx.beginPath(); ctx.arc(518.500, 441, 13.7, 0, 7); ctx.fill();
for (let i = 0; i < 9; i++) dot(508 + rnd() * 20, 430 + rnd() * 13, 0.4);
```
